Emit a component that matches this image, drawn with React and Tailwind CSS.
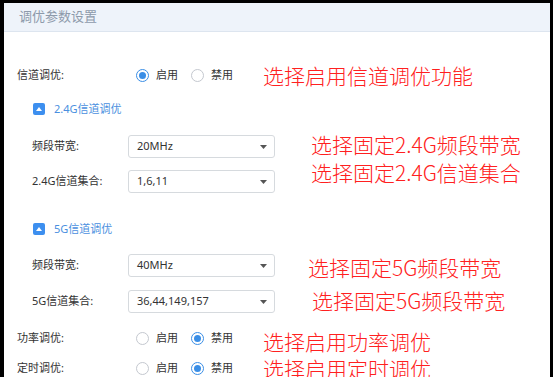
import React from "react";

const font = { fontFamily: '"Noto Sans", "Noto Sans CJK SC", sans-serif' };

const Radio = ({ checked, label }) => (
  <div className="flex items-center">
    {checked ? (
      <span className="flex h-[13px] w-[13px] items-center justify-center rounded-full border border-[#3a8ee6] bg-white">
        <span className="h-[7px] w-[7px] rounded-full bg-[#3a8ee6]" />
      </span>
    ) : (
      <span className="h-[13px] w-[13px] rounded-full border border-[#c4c8cf] bg-white" />
    )}
    <span className="ml-[7px] text-[11px] text-[#333]">{label}</span>
  </div>
);

const Note = ({ children, className = "" }) => (
  <span
    className={`whitespace-nowrap text-[21px] leading-none text-[#ff2020] ${className}`}
    style={{ fontFamily: '"Noto Sans CJK SC", "Noto Sans", sans-serif', fontWeight: 300 }}
  >
    {children}
  </span>
);

const RadioRow = ({ label, on, note, className = "", noteClass = "" }) => (
  <div className={`flex h-[24px] items-center pl-[13px] ${className}`}>
    <span className="w-[119px] text-[11px] text-[#333]">{label}</span>
    <Radio checked={on} label="启用" />
    <div className="ml-[13px]">
      <Radio checked={!on} label="禁用" />
    </div>
    <Note className={`ml-[30px] ${noteClass}`}>{note}</Note>
  </div>
);

const SelectRow = ({ label, value, note, className = "", noteClass = "" }) => (
  <div className={`flex h-[23px] items-center pl-[28px] ${className}`}>
    <span className="w-[96px] text-[11px] text-[#333]">{label}</span>
    <div className="flex h-[23px] w-[147px] items-center justify-between rounded-[3px] border border-[#d6dade] bg-white pl-[8px] pr-[7px]">
      <span className="text-[11px] text-[#333]">{value}</span>
      <svg width="7" height="4" viewBox="0 0 7 4">
        <path d="M0 0 L7 0 L3.5 4 Z" fill="#555" />
      </svg>
    </div>
    <Note className={`relative ${noteClass}`}>{note}</Note>
  </div>
);

const GroupTitle = ({ text, className = "" }) => (
  <div className={`flex h-[16px] items-center pl-[29px] ${className}`}>
    <span className="flex h-[12px] w-[12px] items-center justify-center rounded-[2px] bg-[#3d8fef]">
      <svg width="6" height="4" viewBox="0 0 6 4">
        <path d="M3 0 L6 4 L0 4 Z" fill="#fff" />
      </svg>
    </span>
    <span className="ml-[9px] text-[11px] text-[#4a8fe0]">{text}</span>
  </div>
);

export default function App() {
  return (
    <div className="h-[377px] w-[553px] overflow-hidden bg-black pl-[4px] pr-[3px] pt-[3px]" style={font}>
      <div className="h-full bg-white">
        <div className="flex h-[29px] items-center border-b border-[#dde5ef] bg-[#eef3fa] pl-[15px]">
          <span className="text-[13px] text-[#8d9aab]">调优参数设置</span>
        </div>

        <RadioRow label="信道调优:" on note="选择启用信道调优功能" className="mt-[31px]" />

        <GroupTitle text="2.4G信道调优" className="mt-[14px]" />

        <SelectRow
          label="频段带宽:"
          value="20MHz"
          note="选择固定2.4G频段带宽"
          className="mt-[18px]"
          noteClass="ml-[36px] top-[-2px]"
        />
        <SelectRow
          label="2.4G信道集合:"
          value="1,6,11"
          note="选择固定2.4G信道集合"
          className="mt-[12px]"
          noteClass="ml-[36px] top-[-9px]"
        />

        <GroupTitle text="5G信道调优" className="mt-[28px]" />

        <SelectRow
          label="频段带宽:"
          value="40MHz"
          note="选择固定5G频段带宽"
          className="mt-[17px]"
          noteClass="ml-[33px] top-[2px]"
        />
        <SelectRow
          label="5G信道集合:"
          value="36,44,149,157"
          note="选择固定5G频段带宽"
          className="mt-[13px]"
          noteClass="ml-[37px] top-[-1px]"
        />

        <RadioRow label="功率调优:" on={false} note="选择启用功率调优" className="mt-[13px]" noteClass="relative top-[3px]" />
        <RadioRow label="定时调优:" on={false} note="选择启用定时调优" className="mt-[6px]" />
      </div>
    </div>
  );
}
